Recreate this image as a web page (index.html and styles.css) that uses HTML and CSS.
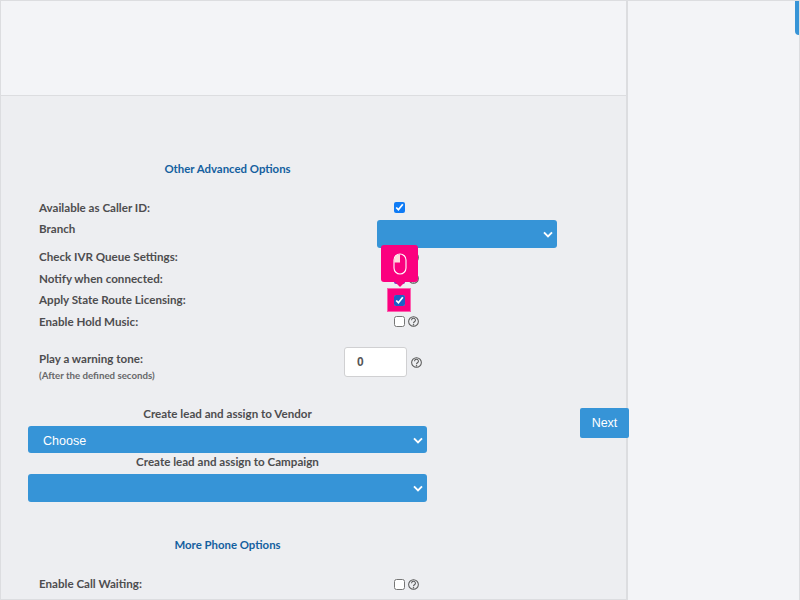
FILE: index.html
```html
<!DOCTYPE html>
<html lang="en">
<head>
<meta charset="utf-8">
<title>Advanced Options</title>
<link rel="stylesheet" href="styles.css">
</head>
<body>
<div class="page">
  <main class="main">
    <header class="head"></header>
    <form class="form">
      <h3 class="title">Other Advanced Options</h3>
      <div class="row"><span class="label">Available as Caller ID:</span><span class="ctrl"><input type="checkbox" class="check" checked></span></div>
      <div class="row row-branch"><span class="label">Branch</span>
        <span class="select-wrap select-branch"><select class="select"><option></option></select><svg class="chev" viewBox="0 0 10 7"><path d="M1 1.3l4 4 4-4"/></svg></span>
      </div>
      <div class="row"><span class="label">Check IVR Queue Settings:</span><span class="ctrl"><input type="checkbox" class="check"><svg class="help" viewBox="0 0 12 12"><circle cx="6" cy="6" r="5.3"/><path d="M3.9 4.6a2.1 2.1 0 1 1 3.2 1.7c-.8.5-1.1.9-1.1 1.6"/><circle class="dot" cx="6" cy="9.6" r=".8"/></svg></span></div>
      <div class="row"><span class="label">Notify when connected:</span><span class="ctrl"><input type="checkbox" class="check check-under" checked><svg class="help" viewBox="0 0 12 12"><circle cx="6" cy="6" r="5.3"/><path d="M3.9 4.6a2.1 2.1 0 1 1 3.2 1.7c-.8.5-1.1.9-1.1 1.6"/><circle class="dot" cx="6" cy="9.6" r=".8"/></svg></span></div>
      <div class="row"><span class="label">Apply State Route Licensing:</span><span class="ctrl"><input type="checkbox" class="check check-active" checked>
        <span class="spot"></span></span></div>
      <div class="row"><span class="label">Enable Hold Music:</span><span class="ctrl"><input type="checkbox" class="check"><svg class="help" viewBox="0 0 12 12"><circle cx="6" cy="6" r="5.3"/><path d="M3.9 4.6a2.1 2.1 0 1 1 3.2 1.7c-.8.5-1.1.9-1.1 1.6"/><circle class="dot" cx="6" cy="9.6" r=".8"/></svg></span></div>
      <div class="row-tone">
        <div class="tone-label"><span class="label">Play a warning tone:</span><small class="hint">(After the defined seconds)</small></div>
        <input type="text" class="num" value="0">
        <svg class="help" viewBox="0 0 12 12"><circle cx="6" cy="6" r="5.3"/><path d="M3.9 4.6a2.1 2.1 0 1 1 3.2 1.7c-.8.5-1.1.9-1.1 1.6"/><circle class="dot" cx="6" cy="9.6" r=".8"/></svg>
      </div>
      <div class="assign">
        <label class="assign-label">Create lead and assign to Vendor</label>
        <span class="select-wrap select-vendor"><select class="select"><option>Choose</option></select><svg class="chev" viewBox="0 0 10 7"><path d="M1 1.3l4 4 4-4"/></svg></span>
        <label class="assign-label">Create lead and assign to Campaign</label>
        <span class="select-wrap select-campaign"><select class="select"><option></option></select><svg class="chev" viewBox="0 0 10 7"><path d="M1 1.3l4 4 4-4"/></svg></span>
      </div>
      <h3 class="title title-more">More Phone Options</h3>
      <div class="row row-wait"><span class="label">Enable Call Waiting:</span><span class="ctrl"><input type="checkbox" class="check"><svg class="help" viewBox="0 0 12 12"><circle cx="6" cy="6" r="5.3"/><path d="M3.9 4.6a2.1 2.1 0 1 1 3.2 1.7c-.8.5-1.1.9-1.1 1.6"/><circle class="dot" cx="6" cy="9.6" r=".8"/></svg></span></div>
    </form>
    <button type="button" class="next">Next</button>
    <div class="tip">
      <svg class="mouse" viewBox="0 0 14 22"><rect x="1" y="1" width="12" height="20" rx="6"/><path class="wheel" d="M7 1.2A5.8 5.8 0 0 0 1.2 7v2.5H7z"/></svg>
    </div>
  </main>
  <aside class="side"><span class="tab"></span></aside>
</div>
</body>
</html>
```
FILE: styles.css
```css
* { box-sizing: border-box; }
html, body { margin: 0; height: 100%; overflow: hidden; }
body { background: #f3f4f7; font-family: "Lato", "Liberation Sans", sans-serif; color: #4d4d4f; }
.page { display: flex; height: 600px; border-top: 1px solid #dcdde0; }
.main { position: relative; width: 628px; height: 599px; border-left: 1px solid #dcdde0; border-right: 2px solid #dcdde0; border-bottom: 1px solid #dcdde0; overflow: visible; }
.head { height: 95px; border-bottom: 1px solid #dcdde0; }
.form { height: 503px; background: #edeef1; padding: 64px 0 0 27px; overflow: hidden; }
.title { margin: 0; width: 399px; height: 18px; font-size: 11.4px; line-height: 18px; font-weight: 700; text-align: center; color: #14609f; }
.row { display: flex; align-items: center; height: 21.5px; padding-left: 11px; width: 600px; }
.title + .row { margin-top: 19px; }
.label { font-size: 11.6px; font-weight: 700; line-height: 18px; color: #4d4d4f; }
.ctrl { display: flex; align-items: center; gap: 3px; position: absolute; left: 393px; }
.check { width: 11px; height: 11px; margin: 0; accent-color: #0f7bf5; }
.check-active { position: relative; z-index: 2; accent-color: #1c5fc6; }
.check-under { accent-color: #7a2fc8; }
.help { width: 11px; height: 11px; fill: none; stroke: #555; stroke-width: 1.1; flex: none; }
.help .dot { fill: #555; stroke: none; }
.row-branch { align-items: flex-start; height: 27px; margin-top: 1px; }
.select-wrap { position: relative; display: block; }
.select { display: block; width: 100%; height: 100%; margin: 0; appearance: none; border: 0; border-radius: 3px; background: #3694d7; color: #fff; font: 12.5px "Liberation Sans", sans-serif; padding: 2px 15px 0; }
.chev { position: absolute; right: 4px; top: 50%; width: 10px; height: 7px; margin-top: -3px; fill: none; stroke: #fff; stroke-width: 1.9; }
.select-branch { position: absolute; left: 376px; width: 180px; height: 28px; }
.row-tone { position: relative; display: flex; align-items: center; height: 30px; margin-top: 14.75px; padding-left: 11px; }
.tone-label { display: flex; flex-direction: column; width: 305px; padding-top: 8px; }
.hint { font-size: 9.7px; font-weight: 700; line-height: 14px; color: #68686a; }
.num { width: 63px; height: 30px; margin: 0 4px 0 0; padding: 0 12px; border: 1px solid #d0d0d2; border-radius: 3px; background: #fff; font: 700 12px "Liberation Sans", sans-serif; color: #555; }
.assign { display: flex; flex-direction: column; width: 399px; margin-top: 28px; }
.assign-label { display: block; height: 18px; font-size: 11.6px; font-weight: 700; line-height: 18px; text-align: center; color: #4d4d4f; }
.select-vendor { height: 27px; margin-top: 3px; }
.select-campaign { height: 28px; margin-top: 3px; }
.title-more { margin-top: 34px; }
.row-wait { margin-top: 18px; }
.next { position: absolute; left: 579px; top: 407px; width: 49px; height: 30px; padding: 0 0 1px; border: 0; border-radius: 2px; background: #3694d7; color: #fff; font: 12.5px "Liberation Sans", sans-serif; z-index: 3; }
.spot { position: absolute; left: -7px; top: -7px; width: 24px; height: 24px; background: #fb007f; border: 1px solid #fb5fae; z-index: 1; }
.tip { position: absolute; left: 380px; top: 244px; width: 37px; height: 37px; border-radius: 3px; background: #fb007f; z-index: 4; display: flex; align-items: center; justify-content: center; }
.tip::after { content: ""; position: absolute; left: 13.5px; top: 37px; border: 5px solid transparent; border-top-color: #fb007f; border-bottom: 0; }
.mouse { width: 14px; height: 22px; fill: none; stroke: #fff; stroke-width: 1.1; }
.wheel { fill: #fdd; stroke: none; }
.side { position: relative; flex: 1; border-right: 1px solid #dcdde0; }
.tab { position: absolute; right: 0; top: 0; width: 4px; height: 34px; background: #3694d7; border-bottom-left-radius: 4px; }
```
